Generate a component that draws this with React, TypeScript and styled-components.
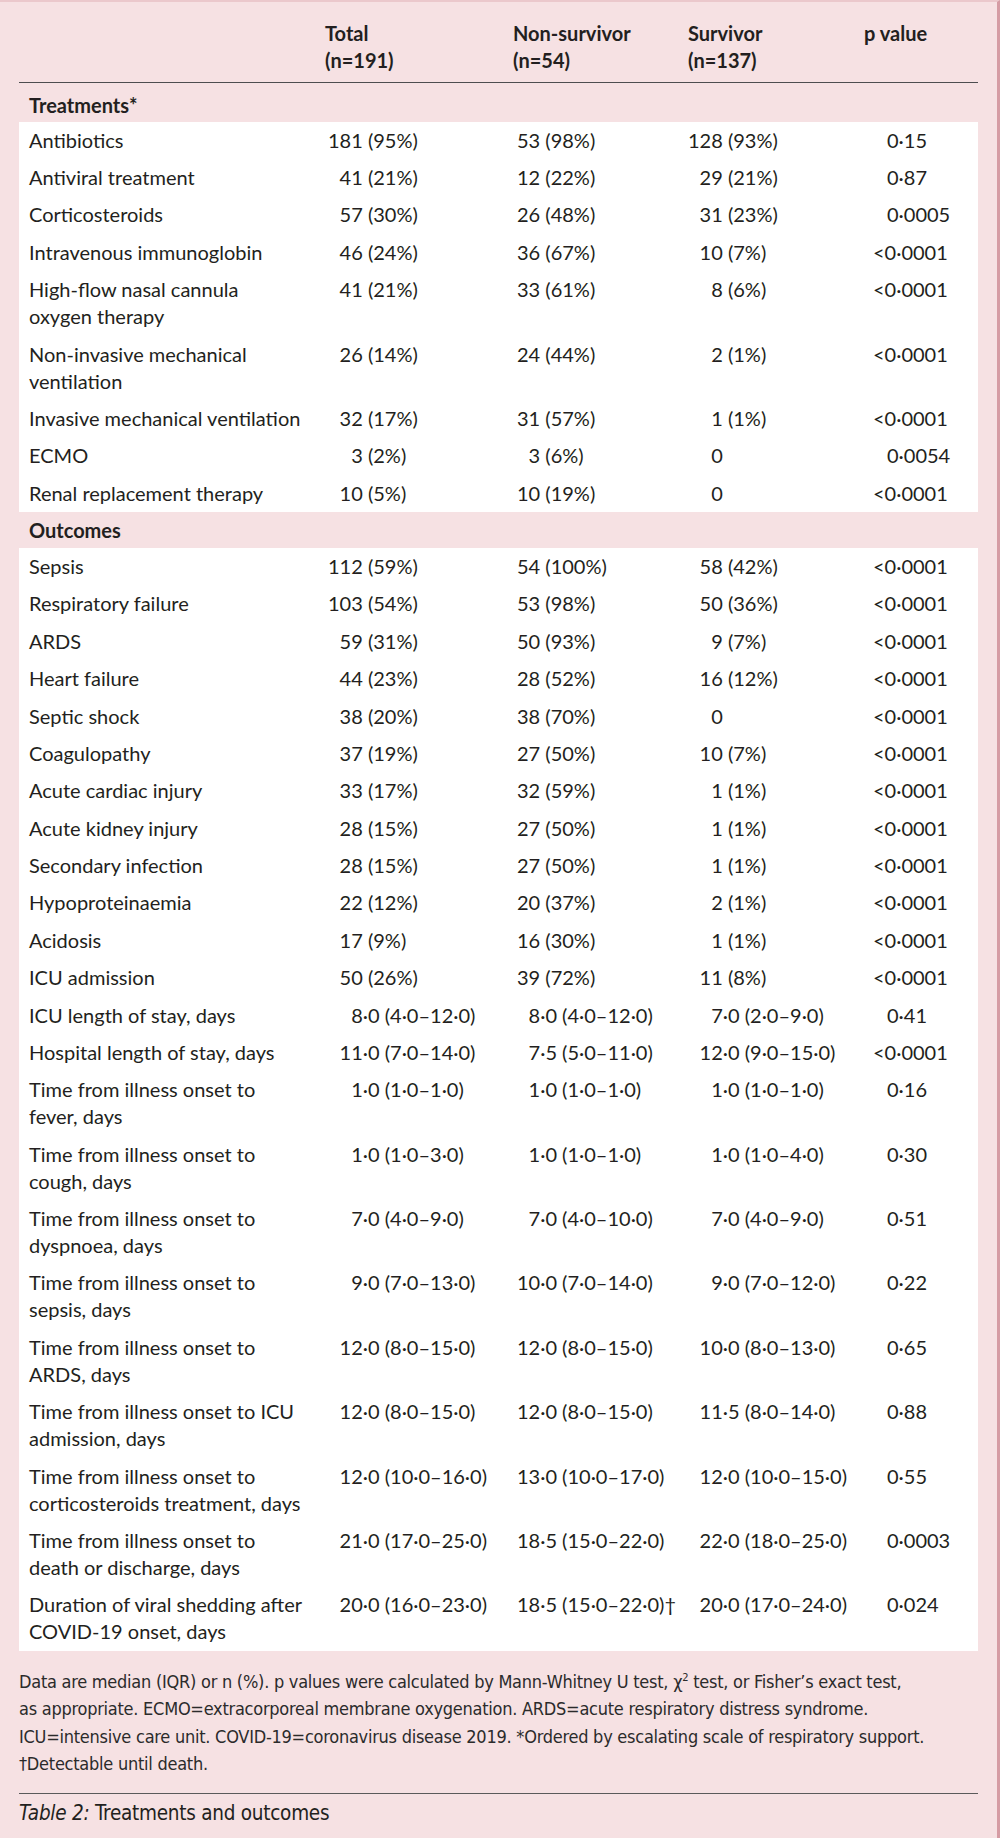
import React from 'react';
import styled, { createGlobalStyle } from 'styled-components';

// label | total | non-survivor | survivor | p value
type Row = { label: string[]; cells: [string, string, string, string] };
type Section = { title: string; rows: Row[] };

const sections: Section[] = [
  {
    title: 'Treatments*',
    rows: [
      { label: ['Antibiotics'], cells: ['181 (95%)', '53 (98%)', '128 (93%)', '0·15'] },
      { label: ['Antiviral treatment'], cells: ['41 (21%)', '12 (22%)', '29 (21%)', '0·87'] },
      { label: ['Corticosteroids'], cells: ['57 (30%)', '26 (48%)', '31 (23%)', '0·0005'] },
      { label: ['Intravenous immunoglobin'], cells: ['46 (24%)', '36 (67%)', '10 (7%)', '<0·0001'] },
      { label: ['High-flow nasal cannula', 'oxygen therapy'], cells: ['41 (21%)', '33 (61%)', '8 (6%)', '<0·0001'] },
      { label: ['Non-invasive mechanical', 'ventilation'], cells: ['26 (14%)', '24 (44%)', '2 (1%)', '<0·0001'] },
      { label: ['Invasive mechanical ventilation'], cells: ['32 (17%)', '31 (57%)', '1 (1%)', '<0·0001'] },
      { label: ['ECMO'], cells: ['3 (2%)', '3 (6%)', '0', '0·0054'] },
      { label: ['Renal replacement therapy'], cells: ['10 (5%)', '10 (19%)', '0', '<0·0001'] },
    ],
  },
  {
    title: 'Outcomes',
    rows: [
      { label: ['Sepsis'], cells: ['112 (59%)', '54 (100%)', '58 (42%)', '<0·0001'] },
      { label: ['Respiratory failure'], cells: ['103 (54%)', '53 (98%)', '50 (36%)', '<0·0001'] },
      { label: ['ARDS'], cells: ['59 (31%)', '50 (93%)', '9 (7%)', '<0·0001'] },
      { label: ['Heart failure'], cells: ['44 (23%)', '28 (52%)', '16 (12%)', '<0·0001'] },
      { label: ['Septic shock'], cells: ['38 (20%)', '38 (70%)', '0', '<0·0001'] },
      { label: ['Coagulopathy'], cells: ['37 (19%)', '27 (50%)', '10 (7%)', '<0·0001'] },
      { label: ['Acute cardiac injury'], cells: ['33 (17%)', '32 (59%)', '1 (1%)', '<0·0001'] },
      { label: ['Acute kidney injury'], cells: ['28 (15%)', '27 (50%)', '1 (1%)', '<0·0001'] },
      { label: ['Secondary infection'], cells: ['28 (15%)', '27 (50%)', '1 (1%)', '<0·0001'] },
      { label: ['Hypoproteinaemia'], cells: ['22 (12%)', '20 (37%)', '2 (1%)', '<0·0001'] },
      { label: ['Acidosis'], cells: ['17 (9%)', '16 (30%)', '1 (1%)', '<0·0001'] },
      { label: ['ICU admission'], cells: ['50 (26%)', '39 (72%)', '11 (8%)', '<0·0001'] },
      { label: ['ICU length of stay, days'], cells: ['8·0 (4·0–12·0)', '8·0 (4·0–12·0)', '7·0 (2·0–9·0)', '0·41'] },
      { label: ['Hospital length of stay, days'], cells: ['11·0 (7·0–14·0)', '7·5 (5·0–11·0)', '12·0 (9·0–15·0)', '<0·0001'] },
      { label: ['Time from illness onset to', 'fever, days'], cells: ['1·0 (1·0–1·0)', '1·0 (1·0–1·0)', '1·0 (1·0–1·0)', '0·16'] },
      { label: ['Time from illness onset to', 'cough, days'], cells: ['1·0 (1·0–3·0)', '1·0 (1·0–1·0)', '1·0 (1·0–4·0)', '0·30'] },
      { label: ['Time from illness onset to', 'dyspnoea, days'], cells: ['7·0 (4·0–9·0)', '7·0 (4·0–10·0)', '7·0 (4·0–9·0)', '0·51'] },
      { label: ['Time from illness onset to', 'sepsis, days'], cells: ['9·0 (7·0–13·0)', '10·0 (7·0–14·0)', '9·0 (7·0–12·0)', '0·22'] },
      { label: ['Time from illness onset to', 'ARDS, days'], cells: ['12·0 (8·0–15·0)', '12·0 (8·0–15·0)', '10·0 (8·0–13·0)', '0·65'] },
      { label: ['Time from illness onset to ICU', 'admission, days'], cells: ['12·0 (8·0–15·0)', '12·0 (8·0–15·0)', '11·5 (8·0–14·0)', '0·88'] },
      { label: ['Time from illness onset to', 'corticosteroids treatment, days'], cells: ['12·0 (10·0–16·0)', '13·0 (10·0–17·0)', '12·0 (10·0–15·0)', '0·55'] },
      { label: ['Time from illness onset to', 'death or discharge, days'], cells: ['21·0 (17·0–25·0)', '18·5 (15·0–22·0)', '22·0 (18·0–25·0)', '0·0003'] },
      { label: ['Duration of viral shedding after', 'COVID-19 onset, days'], cells: ['20·0 (16·0–23·0)', '18·5 (15·0–22·0)†', '20·0 (17·0–24·0)', '0·024'] },
    ],
  },
];

// base offset inside the column and how many integer digits the column aligns on
const columns = [
  { base: 3, digits: 3 },
  { base: 4, digits: 2 },
  { base: 0, digits: 3 },
  { base: 23, digits: 1 },
];

const heads: [string, string][] = [
  ['Total', '(n=191)'],
  ['Non-survivor', '(n=54)'],
  ['Survivor', '(n=137)'],
  ['p value', ''],
];

const leadDigits = (v: string, max: number) => {
  const m = /^\d+/.exec(v);
  return m ? Math.max(0, max - m[0].length) : 0;
};

function App(): JSX.Element {
  return (
    <>
      <GlobalStyle />
      <Page>
        <HeadRow>
          <div />
          {heads.map(([a, b]) => (
            <HeadCell key={a}>
              {a}
              <br />
              {b}
            </HeadCell>
          ))}
        </HeadRow>

        {sections.map((section, si) => (
          <React.Fragment key={section.title}>
            <SectionBand $first={si === 0}>{section.title}</SectionBand>
            <Body>
              {section.rows.map((row) => (
                <Row key={row.label.join(' ')}>
                  <Label>
                    {row.label.map((line, i) => (
                      <React.Fragment key={line}>
                        {i > 0 && <br />}
                        {line}
                      </React.Fragment>
                    ))}
                  </Label>
                  {row.cells.map((v, ci) => {
                    const col = columns[ci];
                    const hang = v.startsWith('<');
                    return (
                      <Value key={ci} $base={hang ? col.base - 14 : col.base} $lead={leadDigits(v, col.digits)}>
                        {v}
                      </Value>
                    );
                  })}
                </Row>
              ))}
            </Body>
          </React.Fragment>
        ))}

        <Note>
          Data are median (IQR) or n (%). p values were calculated by Mann-Whitney U test, χ<sup>2</sup> test, or Fisher’s exact test,
          <br />
          as appropriate. ECMO=extracorporeal membrane oxygenation. ARDS=acute respiratory distress syndrome.
          <br />
          ICU=intensive care unit. COVID-19=coronavirus disease 2019. *Ordered by escalating scale of respiratory support.
          <br />
          †Detectable until death.
        </Note>

        <Caption>
          <em>Table 2:</em> Treatments and outcomes
        </Caption>
      </Page>
    </>
  );
}

const COLS = '306px 188px 175px 176px 1fr';

const GlobalStyle = createGlobalStyle`
  html, body {
    margin: 0;
    background: #f6e1e3;
  }
`;

const Page = styled.div`
  width: 1000px;
  min-height: 1838px;
  box-sizing: border-box;
  padding: 0 19px;
  background: #f6e1e3;
  border-top: 2px solid #ebc8cc;
  border-right: 3px solid #d59ca4;
  font-family: Lato, 'Open Sans', sans-serif;
  color: #231f20;
`;

const HeadRow = styled.div`
  display: grid;
  grid-template-columns: ${COLS};
  padding: 17.5px 0 8px;
  border-bottom: 1.5px solid #4d4d4f;
  font-size: 20px;
  line-height: 27px;
  font-weight: 700;
`;

const HeadCell = styled.div`
  white-space: nowrap;
`;

const SectionBand = styled.div<{ $first: boolean }>`
  padding: ${(p) => (p.$first ? '9px 10px 3px' : '5px 10px 4px')};
  font-size: 20px;
  line-height: 27px;
  font-weight: 700;
`;

const Body = styled.div`
  background: #ffffff;
`;

const Row = styled.div`
  display: grid;
  grid-template-columns: ${COLS};
  padding: 5.2px 0;
  font-size: 20px;
  line-height: 27px;
`;

const Label = styled.div`
  padding-left: 10px;
  white-space: nowrap;
`;

const Value = styled.div<{ $base: number; $lead: number }>`
  padding-left: calc(${(p) => p.$base}px + ${(p) => p.$lead}ch);
  white-space: nowrap;
`;

const Note = styled.p`
  margin: 0;
  padding-top: 17px;
  font-family: 'Liberation Sans Narrow', 'DejaVu Sans Condensed', 'Liberation Sans', sans-serif;
  font-size: 18px;
  letter-spacing: -0.25px;
  line-height: 27.5px;
  color: #2b2b2b;
  white-space: nowrap;

  sup {
    font-size: 11px;
    line-height: 0;
  }
`;

const Caption = styled.div`
  margin-top: 15px;
  border-top: 1.5px solid #5a5a5a;
  padding-top: 5.5px;
  font-family: 'Liberation Sans Narrow', 'DejaVu Sans Condensed', 'Liberation Sans', sans-serif;
  font-size: 20.5px;
  letter-spacing: -0.25px;
  line-height: 28px;
  color: #231f20;

  em {
    font-style: italic;
  }
`;

export default App;
